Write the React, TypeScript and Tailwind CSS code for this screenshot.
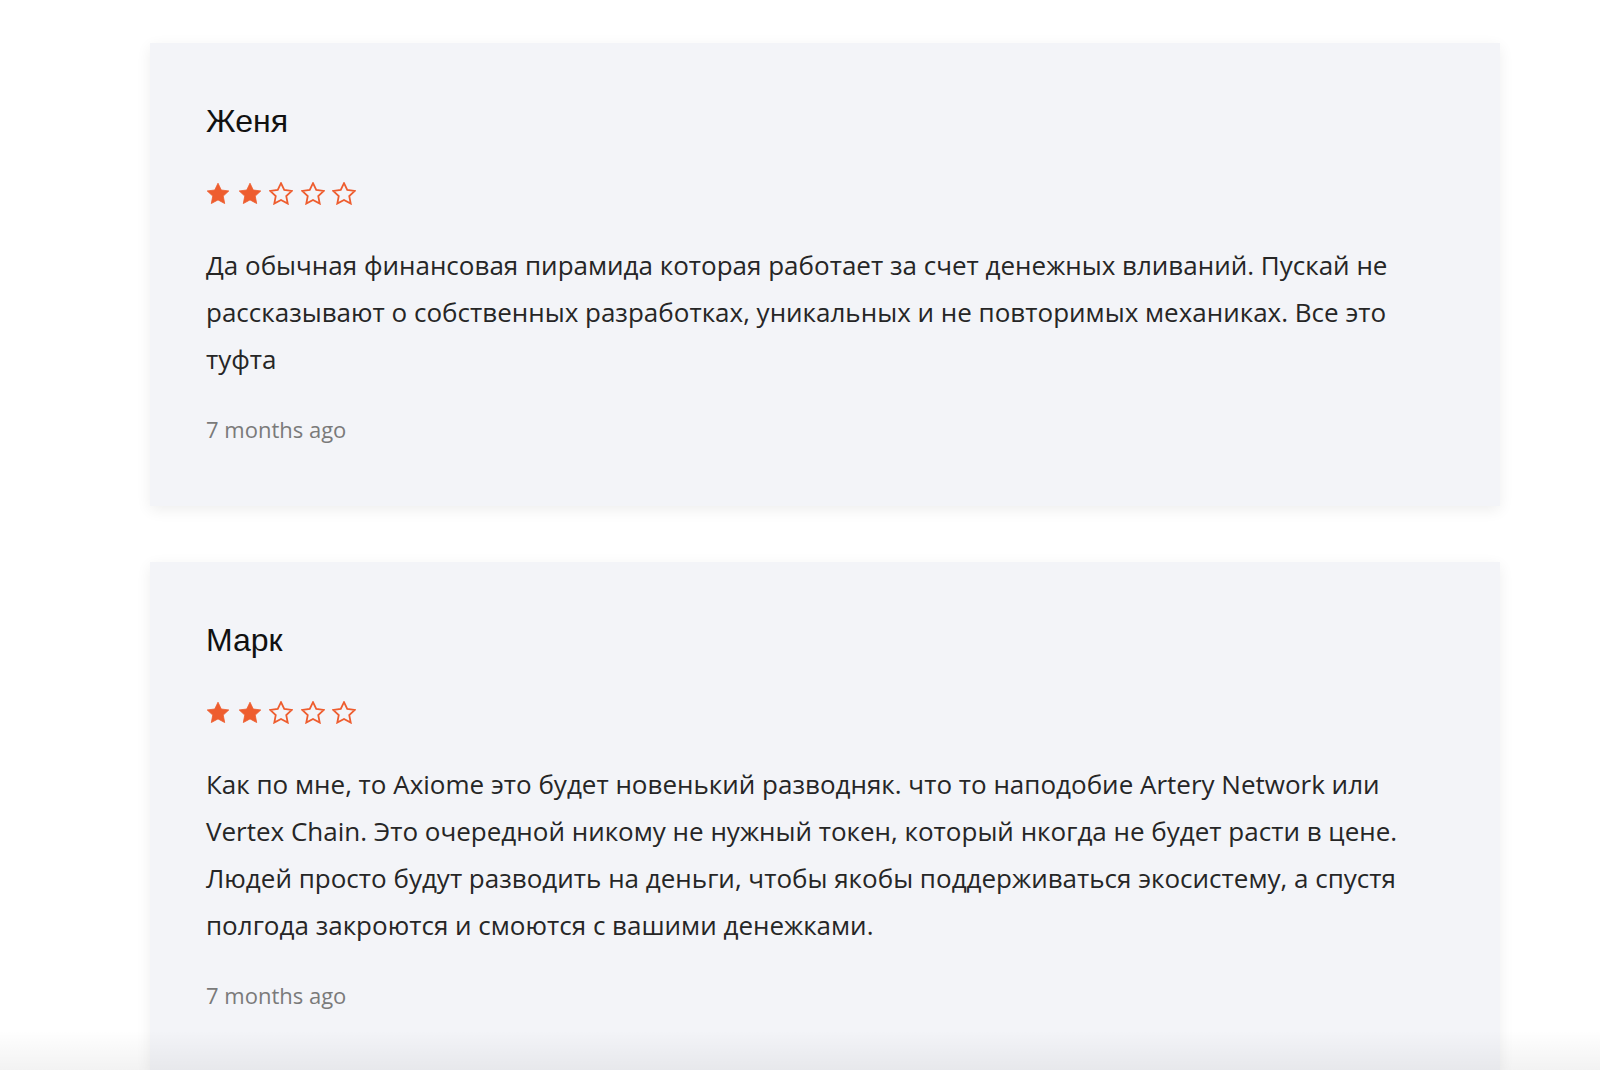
import React from "react";

interface Review {
  name: string;
  rating: number;
  text: string;
  date: string;
}

const REVIEWS: Review[] = [
  {
    name: "Женя",
    rating: 2,
    text: "Да обычная финансовая пирамида которая работает за счет денежных вливаний. Пускай не рассказывают о собственных разработках, уникальных и не повторимых механиках. Все это туфта",
    date: "7 months ago",
  },
  {
    name: "Марк",
    rating: 2,
    text: "Как по мне, то Axiome это будет новенький разводняк. что то наподобие Artery Network или Vertex Chain. Это очередной никому не нужный токен, который нкогда не будет расти в цене. Людей просто будут разводить на деньги, чтобы якобы поддерживаться экосистему, а спустя полгода закроются и смоются с вашими денежками.",
    date: "7 months ago",
  },
];

function Star({ filled }: { filled: boolean }) {
  return (
    <svg width="24" height="23" viewBox="0 0 24 23" aria-hidden>
      <path
        d="M12 1.2l3.25 6.8 7.55.95-5.55 5.15 1.45 7.45L12 17.9l-6.7 3.65 1.45-7.45L1.2 8.95l7.55-.95L12 1.2z"
        fill={filled ? "#ee5d2f" : "none"}
        stroke="#ee5d2f"
        strokeWidth={filled ? 0.8 : 1.8}
      />
    </svg>
  );
}

function ReviewCard({ review }: { review: Review }) {
  return (
    <article className="bg-[#f3f4f8] px-14 pt-[58px] pb-[62px] shadow-[0_4px_14px_rgba(0,0,0,0.07)]">
      <h3 className="font-['Liberation_Sans',Arial,sans-serif] text-[32px] leading-[40px] text-[#111]">
        {review.name}
      </h3>
      <div className="mt-[41px] flex gap-[7.5px]">
        {[0, 1, 2, 3, 4].map((i) => (
          <Star key={i} filled={i < review.rating} />
        ))}
      </div>
      <p className="mt-[37px] font-['Open_Sans',sans-serif] text-[26px] leading-[47px] text-[#262626]">
        {review.text}
      </p>
      <p className="mt-[31px] font-['Open_Sans',sans-serif] text-[22px] leading-[30px] text-[#7a7a7a]">
        {review.date}
      </p>
    </article>
  );
}

export default function App() {
  return (
    <div className="relative h-[1070px] overflow-hidden bg-white">
      <div className="ml-[150px] flex w-[1350px] flex-col gap-14 pt-[43px]">
        {REVIEWS.map((r) => (
          <ReviewCard key={r.name} review={r} />
        ))}
      </div>
      {/* soft fade at the bottom edge of the viewport */}
      <div className="pointer-events-none absolute inset-x-0 bottom-0 h-[40px] bg-gradient-to-b from-transparent to-black/[0.05]" />
    </div>
  );
}
